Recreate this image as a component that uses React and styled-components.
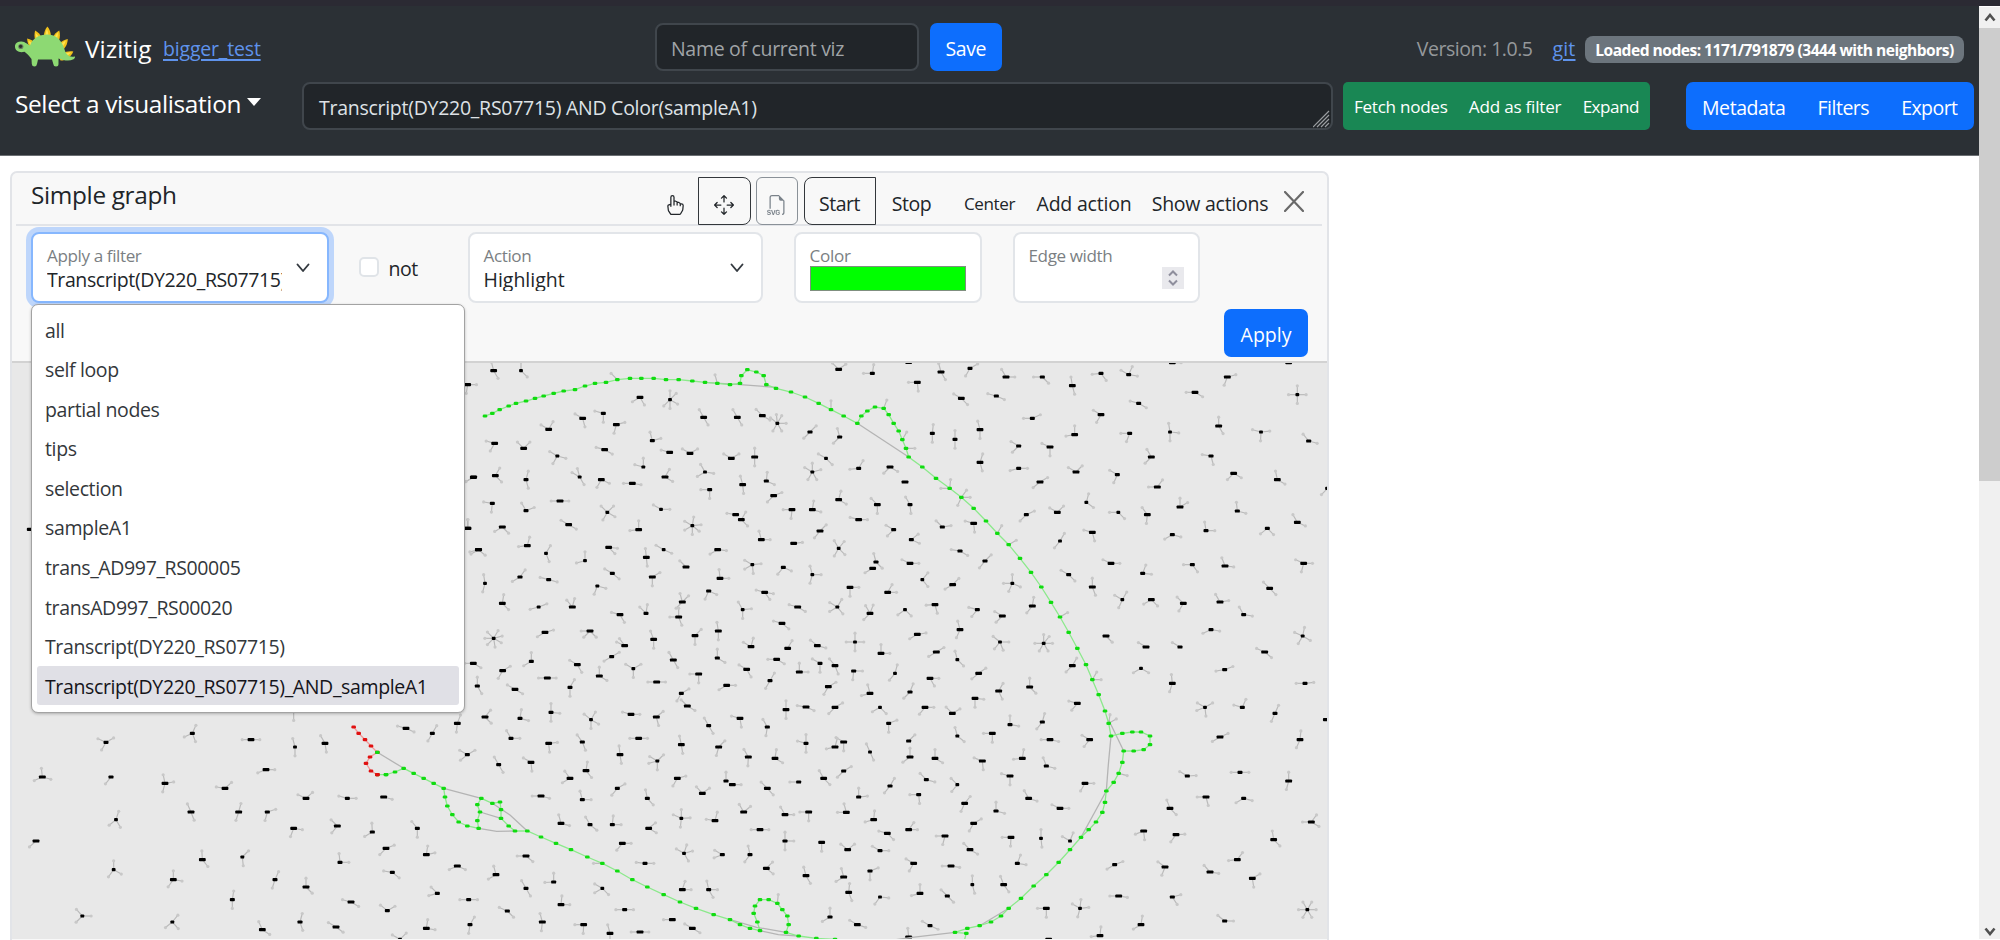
import React from "react";
import styled, { createGlobalStyle, css } from "styled-components";
import { BsHandIndex, BsArrowsMove, BsFiletypeSvg } from "react-icons/bs";

const Global = createGlobalStyle`
  * { box-sizing: border-box; }
  body {
    margin: 0;
    background: #fff;
    overflow: hidden;
    font-family: "Open Sans", "Noto Sans", sans-serif;
    font-size: 19.5px;
    line-height: 30px;
    letter-spacing: -0.4px;
    color: #212529;
  }
`;

const Page = styled.div`
  width: 2000px;
  height: 940px;
  display: flex;
  flex-direction: column;
  overflow: hidden;
`;
const WindowEdge = styled.div`
  height: 6px;
  flex: none;
  background: #2b2a33;
`;
const Viewport = styled.div`
  flex: 1;
  display: flex;
  min-height: 0;
`;
const Main = styled.main`
  width: 1979px;
  display: flex;
  flex-direction: column;
`;

/* Header */
const Header = styled.header`
  height: 150px;
  flex: none;
  padding: 17px 0 0;
  background: #2b3035;
  border-bottom: 1px solid #6b6f73;
  display: flex;
  flex-direction: column;
  gap: 11px;
`;
const HeaderRow = styled.div`
  display: flex;
  align-items: center;
  height: 48px;
  padding: 0 ${(p) => p.$right}px 0 15px;
`;
const Label = styled.span`
  font-size: ${(p) => p.$size || 19.5}px;
  letter-spacing: ${(p) => (p.$track === undefined ? -0.4 : p.$track)}px;
  font-weight: ${(p) => p.$weight || 400};
  color: ${(p) => p.$color || "inherit"};
  white-space: nowrap;
`;
const Brand = styled.div`
  width: 640px;
  display: flex;
  align-items: center;
  color: #fff;
  svg { margin: 0 10px 0 0; }
`;
const BrandName = styled(Label)`
  padding-top: 4px;
  width: 78px;
`;
const Link = styled.a`
  color: #5f93ec;
  text-decoration: underline;
  text-underline-offset: 3px;
  text-decoration-thickness: 1.5px;
  letter-spacing: ${(p) => p.$track}px;
  padding-top: 4px;
`;
const field = css`
  height: 48px;
  background: #212529;
  border: 2px solid #40464c;
  border-radius: 8px;
  display: flex;
  align-items: center;
  padding: 4px 0 0 14px;
`;
const NameInput = styled.div`
  ${field}
  width: 264px;
  color: #a0a4a7;
  letter-spacing: -0.31px;
`;
const Query = styled.div`
  ${field}
  width: 1031px;
  padding-left: 15px;
  color: #dee2e6;
  letter-spacing: -0.27px;
  justify-content: space-between;
  svg { align-self: flex-end; }
`;
const PrimaryButton = styled.button`
  width: ${(p) => p.$w}px;
  height: 48px;
  border: 0;
  border-radius: 7px;
  background: #0d6efd;
  color: #fff;
  font: inherit;
  letter-spacing: ${(p) => p.$track}px;
  padding: ${(p) => p.$top || 3}px 0 0;
  margin-left: ${(p) => p.$left || 0}px;
`;
const HeaderInfo = styled.div`
  margin-left: auto;
  display: flex;
  align-items: center;
`;
const Version = styled(Label)`
  padding-top: 4px;
  margin-right: 20px;
`;
const Badge = styled.span`
  margin-left: 9.5px;
  margin-top: 4px;
  width: 379px;
  height: 27px;
  border-radius: 8px;
  background: #6c757d;
  color: #fff;
  font-size: 15.6px;
  font-weight: 700;
  letter-spacing: -0.52px;
  line-height: 29px;
  text-align: center;
  white-space: nowrap;
`;
const VizSelect = styled.div`
  width: 287px;
  display: flex;
  align-items: center;
  gap: 6px;
  color: #fff;
  padding-bottom: 5px;
`;
const Caret = styled.i`
  border: 7.5px solid transparent;
  border-top: 8px solid #fff;
  border-bottom: 0;
  margin-top: -4px;
`;
const ButtonGroup = styled.div`
  height: 48px;
  padding-top: ${(p) => p.$top}px;
  border-radius: ${(p) => p.$radius}px;
  background: ${(p) => p.$bg};
  color: #fff;
  display: flex;
  align-items: center;
  justify-content: space-between;
  width: ${(p) => p.$w}px;
  padding-left: ${(p) => p.$pl}px;
  padding-right: ${(p) => p.$pr}px;
  margin-left: ${(p) => p.$left}px;
`;

/* Graph card */
const Card = styled.section`
  position: relative;
  width: 1319px;
  height: 769px;
  flex: none;
  margin: 15px 0 0 10px;
  background: #f8f8f8;
  border: 2px solid #e2e4e8;
  border-radius: 7px 7px 0 0;
  border-bottom: 0;
`;
const CardHead = styled.div`
  height: 53px;
  margin: 0 5px 0 4px;
  padding-left: 15px;
  border-bottom: 2px solid #e2e4e8;
  display: flex;
`;
const CardTitle = styled(Label)`
  flex: 0 0 618.5px;
  padding-top: 5px;
  line-height: 34px;
`;
const Tool = styled.button`
  width: ${(p) => p.$w}px;
  height: 48px;
  margin: 4px ${(p) => p.$gap || 0}px 0 0;
  padding: ${(p) => (p.$icon ? 7 : 5)}px 0 0;
  flex: none;
  background: transparent;
  color: ${(p) => (p.$muted ? "#7a828a" : "#212529")};
  border: 1.5px solid ${(p) => (p.$outline ? (p.$muted ? "#8a9198" : "#33373b") : "transparent")};
  border-radius: ${(p) => p.$radius || 0};
  font: inherit;
  font-size: ${(p) => p.$size || 19.5}px;
  letter-spacing: ${(p) => p.$track || 0}px;
  display: flex;
  align-items: center;
  justify-content: center;
  white-space: nowrap;
`;
const CloseIcon = styled.svg`
  margin: 18px 0 0 0;
  flex: none;
`;
const Form = styled.div`
  height: 137px;
  padding: 5.5px 19px 0;
  border-bottom: 2px solid #d2d2d2;
`;
const FormRow = styled.div`
  display: flex;
  height: 71px;
`;
const Field = styled.div`
  width: ${(p) => p.$w}px;
  height: 71px;
  margin-right: ${(p) => p.$gap}px;
  padding: 15px 14px 0;
  background: #fff;
  border: 2px solid ${(p) => (p.$focus ? "#86b7fe" : "#e2e5e9")};
  box-shadow: ${(p) => (p.$focus ? "0 0 0 5px #bed6fb" : "none")};
  border-radius: 8px;
  display: flex;
  align-items: flex-start;
  justify-content: space-between;
`;
const FieldBody = styled.div`
  width: ${(p) => p.$w}px;
  display: flex;
  flex-direction: column;
`;
const FieldLabel = styled.span`
  font-size: 17.1px;
  line-height: 24px;
  height: 24px;
  margin: -4.5px 0 -2.5px;
  color: #7b7f83;
  letter-spacing: ${(p) => p.$track}px;
`;
const FieldValue = styled.span`
  height: 25px;
  line-height: 28px;
  overflow: hidden;
  white-space: nowrap;
  letter-spacing: ${(p) => p.$track}px;
`;
const Chevron = styled.svg`
  margin: 14px ${(p) => p.$right}px 0 0;
`;
const Swatch = styled.div`
  width: 156px;
  height: 25px;
  flex: none;
  background: #0f0;
  border: 1.5px solid #7f8f7f;
`;
const Spinner = styled.div`
  width: 22px;
  height: 22px;
  margin-top: 18px;
  background: #e9e9ed;
  display: grid;
  place-items: center;
`;
const Check = styled.label`
  width: 109px;
  display: flex;
  gap: 10px;
  padding-top: 25.5px;
`;
const CheckBox = styled.i`
  width: 20px;
  height: 20px;
  background: #fff;
  border: 2px solid #e0e4e8;
  border-radius: 5px;
`;
const CheckText = styled.span`
  line-height: 24px;
  letter-spacing: -0.5px;
`;
const ApplyRow = styled.div`
  display: flex;
  justify-content: flex-end;
  padding-top: 6px;
`;
const Dropdown = styled.ul`
  position: absolute;
  left: 19px;
  top: 130.5px;
  width: 433.5px;
  height: 409px;
  margin: 0;
  padding: 5px 4.5px;
  list-style: none;
  background: #fff;
  border: 1.5px solid #a3a3a3;
  border-radius: 7px;
  box-shadow: 0 1px 3px rgba(0, 0, 0, 0.25);
`;
const Option = styled.li`
  height: 39.6px;
  padding-left: 8.5px;
  line-height: 41px;
  letter-spacing: -0.37px;
  border-radius: 3px;
  color: ${(p) => (p.$active ? "#15141a" : "#33373b")};
  background: ${(p) => (p.$active ? "#e0e0e6" : "transparent")};
  white-space: nowrap;
`;
const GraphSvg = styled.svg`
  display: block;
  width: 1315px;
  height: 576px;
  background: #e8e8e8;
`;

/* Scroll bar */
const ScrollBar = styled.div`
  width: 21px;
  height: 932px;
  margin-top: 1px;
  background: #f0f0f0;
  display: flex;
  flex-direction: column;
`;
const ScrollButton = styled.div`
  height: ${(p) => p.$h}px;
  display: grid;
  place-items: center;
`;
const ScrollThumb = styled.div`
  height: 453px;
  margin-bottom: auto;
  background: #cdcdcd;
`;

/*
 * Graph nodes, grouped in tiles. Positions are in thirds of a pixel from the
 * tile's origin: "x y kind hour hour ...", where kind is the mark's length
 * (W, M, S) and each hour is the clock direction of one neighbour.
 */
const TILES = [
  [0, 440, `88 268 M;1420 112 W 8;1403 265 W 12;1436 329 W 8;85 742 N`],
  [460, 350, `23 104 W 3 6.3;101 62 W 11.5 5;183 62 S 12 4.5;540 142 W 8 5;630 149 S 12 1.5 4 6 7.5;368 205 W 10 5.5;430 190 M 9.5 6;469 224 W 2.5 6.5;266 238 W 10 1;731 202 W 11 5;832 202 W 11 5;907 197 W 10.5 4;952 220 S 10.3 11.8 1 3 5 7;1050 246 M 1.5 7.5;1139 261 M 11.5 7.5;104 280 W 9.5 7;191 295 W 10.5 1.5;577 272 M 11.5 2.5;434 299 W 9.5 4;292 318 S 10 3.5 7;629 307 W 9.5;690 310 W 10 2;814 325 W 10 2;884 321 W 12 6;1098 325 S 10 4.5;1196 355 M 1 8.8;1290 351 W 7.5 4;1335 396 W;550 351 S 12 9.5;615 381 W 1 4;735 366 S 11 3.3 8;1057 366 S 12 10 2.5 5 7;41 381 W 8;106 377 W 1 4.5;198 389 M 12.5 5.5;359 381 S 11.5 10 5;424 389 W 3.8 7;517 400 W 9 3.3;848 404 W 11.5 5.8;919 393 M 12.2 3.8;749 419 M 9 6;941 437 W 2.3 7.5;97 460 M 9.3 6.2;300 453 W 9 3;198 482 M 11 2.3;442 487 S 10.5 1.5 4 7;603 478 S 10 3;697 527 S 12.3 2.8 4.3 6 8 10;827 494 W 9.3;844 509 W 1 4.5;996 479 W 9 6.2;1057 479 W 12.3 3.5;1136 449 W 12.5 4;1252 464 W 10.5 6;1350 464 M 11 5.8;1196 509 W 9.5 3;1447 531 M 10.5 2.7;24 535 W 12;127 531 W 8 4.5;326 524 W 10 4;536 539 W 12 8.8;1080 543 W 1.5 7.3;1301 539 M 10 7.5;1354 569 M 1.7 3.8;904 569 W 11.5 3;1001 580 W 2.8;55 599 W 8.5 4.3;202 587 W 12.5 8.8;258 610 S 1 5.3;446 592 W 3.2 4.5;611 599 S 10 3.8;559 622 W 11.8 5.8;773 599 W 8 3.2;877 644 S 10 2.8 5.8 8;1136 595 S 11 1.3 4.5 7;375 632 S 12 8.5;678 651 W 10.5;970 652 M 3.8 7.3;1248 636 M 11.5 4.5;1238 655 W 8;1350 640 W 9.8 3;457 670 M 10 4.3;180 681 M 1.2 8;266 689 M 9.5 3.5;75 700 S 11.7 6.5;577 681 W 2 6;780 685 W 11.8 3;1057 674 S 11.5 3 6.5;1387 689 S 1.3 4.7;1478 704 W 1.5 8;412 708 S 3.5 6.7;746 723 M 3.8 6.8;914 727 W 9.5 3.3 4.8;1170 712 W 3 6;1283 727 W 1 3;127 760 W 12.3 4.5;667 756 W 11.5 1.5 7.5;236 771 S 2.3 8.5;337 771 W 10.7 12.5;848 779 S 11 2.8 6;1013 771 W 9.5 4;1132 771 S 10 1 4.7 8;1230 790 W 11 12.7 7.5;1335 779 S 7.8 4.5;1425 764 W 8.9 5.5;480 794 W 9.5 5;558 790 M 12.3 10.5;656 801 W 9 5.3 12;966 820 W 9.5 4.3;390 843 W 9 4.5 7.5;255 847 W 2.5 8;101 865 S 9 10.5 1 2.5 4 5.7 7.5;775 843 W 11.7 6;705 857 W 1.5 6;581 868 W 11.3 6;1372 853 W 2.7 8;494 887 W 9.8 10.8;873 890 W 10 12.5;983 895 W 1;1072 887 W 10.3 3.5;1185 876 S 12 9 3 6;1136 58 W 1.8 10.5;1237 70 M 12.3 9;1346 37 W;1372 97 W 9 5.8;1443 66 W 11.5 5;1417 250 M 12.2 6;1485 268 M 12 6;472 89 N 10.5;772 100 N 11.5;1113 179 N 12;1271 175 N 12.7;1327 269 N 1;1338 295 N 3;1469 415 N 12.2 9`],
  [860, 360, `304 115 W 10 4.5;330 25 M 2 7;438 51 W 11 3;409 108 M 9.5 3.8;547 51 M 9 4.5;637 77 W 11.7 5.5;723 40 M 8.8 4.8;806 44 M 12.8 10 3.3;1102 51 W 2.5 6.7;1005 97 W 9 4;1312 104 S 12 3 6 9;836 130 M 9.5 4;517 175 M 2.2 9;723 164 W 10 7;360 209 W 11.5 6;644 224 W 12 8.7;809 220 M 9 6.7;930 216 S 11.7 3.2 6;1076 198 W 12 5;1203 216 S 9.5 2.8 6.1;1346 243 M 10.7 3.5;476 258 M 10 7.5;570 261 W 9.8 6;360 307 W 12.6 5.5;1053 288 M 9.3 5.5;874 291 W 11 7.5;476 325 M 8.5 3;648 336 W 10 1.5;772 344 M 10 6.8;540 366 W 2 7.7;1121 340 W 7.5 4;1252 359 W 11.6 4;892 381 W 1.2 9;1403 385 M 7.5;679 427 S 12.5 4.2;592 457 W 10 1.5;960 441 W 12 2;1132 453 M 11.8 3.5;499 464 M 2.2 7.5;775 457 S 9 4.5;862 464 W 10.8 6.2;1312 487 W 11 3.8;697 517 W 9.5 5.5;341 490 W 9.5 5.8;1222 505 M 7.7 4.5;1038 512 M 11.7 3;937 524 M 3.5 8;600 543 S 1 7.3;375 603 M 1.5 7.3;300 573 M 9.3 4;753 610 W 9.8 3;848 640 M 12.7 3.2;997 614 M 9 4.8;1095 618 W 11.3 3.2;1331 610 W 9.8 3 6.5;626 644 M 10 4.5;457 670 S 12 9 3.8 6.8;697 681 W 12 5.3;787 719 S 10 1 6.8;874 719 W 8 4.5;970 730 W 10.5 7;1080 726 W 11 2.7;1229 685 W 10.5 4.5;1151 764 M 11 3.3;517 738 W 12.3 7.3;352 749 M 9.5 7.3;427 768 W 10 7.5;1053 809 M 8.2 3.3;300 809 W 11.5 6.8;420 846 S 10.3 3 5.3 7.3;551 850 S 12 1.3 3 5 7 9;738 828 W 4.5;858 861 W 10;960 861 M 10;1328 828 S 12.4 4 7 9.8;937 8 W 3;1286 8 W;304 412 N 1.2 3 6.8;412 520 N 1;446 554 N 2;600 771 N 2`],
  [820, 640, `183 40 W 12 3;349 36 W 2 8;412 59 S 11.5 4.5;45 77 W 10.7 5.3;101 93 M 3 6.2;225 100 S 12.5 7.3;476 100 W 1.8 7.7;330 115 W 3 5;757 77 W 1 7.5;963 85 S 8 4;1214 89 M 2.3 8.7;1334 36 W 9.8 4.3;1057 130 W 11.8 6.6;1455 130 M 9 2.8;150 160 W 11.5 8.5;270 156 M 12.7 7.5;536 153 W 1 5.2;629 141 W 12 4.5;465 175 W 3.2 6;772 190 W 9.5 7.3;45 202 W 2 7.5;180 202 S 8 4.5;315 202 W 3 7.3;397 220 W 10.5 2;206 250 M 2.3 6;570 254 M 12 3.3;667 246 M 12.5 7.3;1155 202 S 10 2 5.8 8.3;1267 202 M 12.8 9.5;1365 220 M 12.8 6.8;1519 239 W;517 280 W 9 6;412 288 S 11.5 4.3;690 299 W 9 3.4;809 299 W 10 7.3;1200 291 W 2.2 8;1440 299 W 12.2 6.8;71 306 W 10 6;45 321 W 8.6 12.5;266 303 M 1.5;270 351 W 12 7.8;345 355 W 12 4;150 336 S 11.2 5.2;607 355 W 12.3 8.8;487 363 W 9.7 5.8;679 378 M 11.3 3.5;71 393 M 2 7.5;11 415 W 11 4.5;570 408 W 9.5 6;210 438 M 1 7.3;319 419 M 10.5 3.5;412 434 S 10.5 7.3;795 430 W 3 7;1102 408 M 10 2.9;1260 397 M 9 3;1406 423 W 12 6.5;116 471 M 12 2.8;296 464 M 9 5.8;434 490 W 1.3 6.8;626 475 W 11 3.6;720 505 W 9.8 3;1158 471 W 9 5.5;1271 475 M 8 3.5;1050 505 W 11.3 4.5;528 513 M 12 3.5;79 517 W 11.5 9;161 539 W 12.2 8.5;461 550 W 2 7;1474 546 W 1.2 9 4;266 569 W 1.2 3;202 580 W 9.5 4.5;375 588 W 9 6.5;573 592 W 9 6.1;663 595 S 12 5.8;750 603 S 10 12.7;971 573 W 8.3 5.8;1068 584 W 2.9 7.2;1361 599 W 11.7 4.5;5 607 W 6;83 629 W 10.3 1.7;180 632 M 10 3;450 629 W 10.5 4;281 670 W 10 7;393 678 W 9 3.3;592 670 M 12.7 3.3;884 674 M 2.3 8;1035 681 W 10.2 6.7;1252 659 W 1.2 8.8;150 693 M 2.3 6;71 711 W 11.5 8;1170 696 W 10.6 3.3;1297 715 W 2 5.7;457 734 S 12 5.5;551 734 W 11.3 4.8;86 757 W 12.2 5.3;300 760 W 12 8.5;180 771 S 3.2 7.2;382 768 M 10.5 4.5;896 768 W 9 3.3;1057 771 M 2.5 4.9;679 805 W 9 6;780 805 S 12.2 2.8 6.5 10;1462 809 S 11 1 3 5 7 9;30 831 M 12 8;112 854 W 10 3.6;330 857 M 10 3.8;963 854 W 12.3 8;1214 843 M 10.3 3;266 891 W 11.8;840 887 W 12.2 8.8;686 898 W;817 119 N 1 3;866 250 N 12.3 2;896 400 N 3.5`],
  [320, 700, `15 130 W 11 5.7;258 85 W 9.5 3.8;337 100 M 1 7;412 70 W 12.7 6.2;495 51 W 1.3 4.5;600 55 M 12.3 3.5;693 37 M 12 3.2 6;813 59 S 10.3 1 4 6;933 43 W 9.5 3;1009 51 W 1.7 5.5;1102 18 W 10.5 4;1166 77 M 11 5;1260 55 W 9.5 5.7;1398 29 W 12 6;1458 21 W 9.3 3.8;573 115 M 11 3;686 130 W 2.8 5.8;787 126 M 10.8 5.3;956 115 W 9 3;1084 134 W 11.6 5.7;1196 141 W 1.5 6.5;1342 81 M 11 6.3;1458 130 M 12 6 9.5;442 164 M 10 2 7.7;536 194 M 11 5;633 187 W 10 5.8;900 164 W 11.8 5.7;1012 183 S 10 1.5 8.5 6;1285 171 W 11 6.1;1365 175 W 12.3 4;750 235 W 10.8 8;798 212 W 12.3 4.7;1072 235 W 2.5 7;1218 243 M 12;1237 254 W 3;892 265 M 2 7.3;1147 280 W 10.6 1.8;1342 265 W 10.5 4.6;1436 246 M 9;82 295 M 9.5 3;191 291 W 3.5;663 288 W 9 3.5;787 299 M 11.5 3;982 295 M 11.6 4.6;52 378 W 10.5 7.3;157 396 M 11.9 8;292 385 M 10.7 6;723 370 W 11.5 3.5;810 374 M 11 4.3;877 374 M 12.2 3;986 385 W 1.7 4;1084 355 S 12 2.9 6.2 9.8;1185 362 W 12.5 9.3;1271 336 W 11 1.7;1320 389 W 9 3;1395 344 W 11 3;1466 336 W 9 6;198 445 W 2.3 7.5;319 464 W 12.3 2.6;907 430 W 3 7.3;1092 460 S 10 12.6 2.5 5;1395 423 M 12 3 6;60 487 M 11.8 3;217 517 M 9.3 4.3;412 498 W 8.2 3.8;618 468 W 9 4.3;528 524 W 11.5 8;975 490 M 9.2 3;1207 464 M 10 8.3;1290 464 M 11.6 7.2;1339 505 W 1.5 4.3;1458 527 W 11.5 5;352 580 M 10.5 8.5;618 565 M 11 5;701 546 M 12 8.9;847 565 S 10 8 4.5;1087 569 W 12.6 3;1166 569 M 11.6 3 5;93 606 W 9.5 4;202 632 M 10.3 2;446 599 M 9 3;562 633 M 9.8 4.5;723 614 W 12.2 3;914 629 M 9 3;48 681 W 10 4.2;319 685 W 12.3 3.3;450 674 M 1 6.3;667 666 W 11.5 6.2;791 674 W 9 6.1;1057 659 W 9;1117 685 W 10 4;870 700 W 11.5 6;960 696 W 9 3;240 718 S 10 1.5;847 490 N 9;1372 610 N 12.2`],
  [0, 700, `318 127 M 9.8 2 7;577 100 M 12.8 8.2 5.3;753 119 W 9 3;885 141 S 11.5 6;881 35 N 6;127 231 W 11.8 8.2 3.5;333 231 M 7.3;495 250 W 11.6 2.7 6.5;798 209 W 3 8.3;675 265 W 9.3 1.6;918 295 W 9.8 1.6;573 336 W 11.2 5.3;716 336 W 12.5 6.6;802 336 M 2.4 6.5;348 359 S 12.6 5 7.7;108 423 W 7.6;881 385 W 3.3 6.7;607 479 W 11.9 4.7;727 471 S 1.5 5.8;341 509 S 12 4 7.2;520 539 W 12 3.3 7.2;825 539 M 12.8 6.6;918 561 W 12 4.5;697 599 M 12.3 6;247 648 S 10.6 3 7.5;517 666 S 1.3 4.6 7.7;787 689 W 11.2 4.1;900 666 M 12.5 5.4`],
  [460, 650, `40 40 W 9 4;52 108 M 12 5;128 62 W 2 7;165 118 W 10 4;214 34 M 12 8;262 84 W 9 3;330 112 M 1 6;352 44 W 10 5;418 78 W 12 4;455 20 M 2 8;520 56 S 10 2 6;590 96 W 9 3;640 30 W 11 5;664 130 M 2 7;716 72 W 9 6;772 24 M 12 4;800 106 W 3 8;860 58 W 10 5;930 92 M 1 7;950 28 W 9 4;1018 66 W 12 3;1080 40 M 10 6;1105 110 W 2 7;`],
];

const BLACK = TILES.flatMap(([ox, oy, text]) =>
  text.split(";").filter(Boolean).map((row) => {
    const [x, y, kind, ...hours] = row.trim().split(" ");
    return { x: ox + x / 3, y: oy + y / 3, kind, hours: hours.map(Number) };
  })
);
const LENGTH = { W: 6.8, M: 5, S: 3.8 };

const points = (ox, oy, text) =>
  text.split(" ").map((p) => {
    const [x, y] = p.split(",").map(Number);
    return [ox + x / 3, oy + y / 3];
  });
const ARC = [
  ...points(460, 350, "75,198 97,190 119,179 146,168 168,160 198,153 225,145 251,138 281,130 311,123 345,119 375,108 405,100 438,97 472,89 510,85 544,85 581,85 618,89 656,89 697,93 735,97 772,100 810,104 840,100 844,77 862,59 889,66 911,77 919,104 948,115 993,126 1035,141 1076,160 1113,179 1151,198 1192,220 1204,198 1222,183 1245,171 1271,175 1286,194 1301,220 1316,243 1327,269 1338,295 1346,321 1387,351 1428,385 1469,415"),
  ...points(860, 360, "304,412 341,445 378,483 412,520 446,554 480,595 513,637 544,681 573,727 600,771 626,817 652,865"),
  ...points(820, 640, "798,74 817,119 836,164 855,213 866,250 873,288 907,280 937,276 963,276 990,288 990,314 971,329 941,333 911,333 907,367 896,400 881,427 859,453 855,487 847,517 828,546 806,569 783,592 750,629 716,667 679,704 641,738 603,775 566,805 543,828 513,846 479,857 442,865 405,877 439,880 432,905"),
];
const TAIL = [
  ...points(320, 700, "172,224 198,224 225,216 251,205 281,220 311,235 341,250 371,265 375,291 382,318 397,344 416,366 442,378 476,385 472,362 480,336 472,314 484,295 517,310 540,306 543,329 543,355 566,378 585,393 622,393 663,411 708,430 753,449 802,471 847,490 892,513 937,539 982,561 1031,584 1080,606 1128,625 1181,644 1230,659 1260,674 1290,685 1320,692 1312,666 1301,640 1305,618 1320,599 1346,599 1372,610 1387,629 1402,648 1406,674 1398,697 1436,708 1489,715"),
  ...points(820, 640, "45,898 93,902"),
];
const RED = points(320, 700, "101,81 116,100 135,119 153,138 172,157 150,171 138,190 153,213 172,224");
const SHORTCUTS = [
  points(320, 700, "172,157 251,205"), points(320, 700, "371,265 484,295"),
  points(320, 700, "480,336 543,355"), points(320, 700, "476,385 530,394 585,393"),
  points(320, 700, "517,310 570,345 622,393"), points(320, 700, "1230,659 1310,682 1398,697"),
  points(320, 700, "1320,692 1375,704 1436,708"), points(460, 350, "735,97 840,104 948,112"),
  points(460, 350, "1192,220 1346,321"), points(820, 640, "866,240 911,333"),
  points(820, 640, "873,288 865,375 859,453"), points(820, 640, "859,453 783,592"),
  points(820, 640, "566,805 479,857"), points(820, 640, "405,877 270,893 200,903"),
];
const line = (pts) => pts.map(([x, y]) => `${x.toFixed(1)},${y.toFixed(1)}`).join(" ");

function Dots({ pts, color }) {
  return pts.map(([x, y], i) => (
    <rect key={i} x={x - 2.3} y={y - 1.6} width={4.6} height={3.2} rx={1.3} fill={color} />
  ));
}

function Graph() {
  return (
    <GraphSvg viewBox="12 363 1315 576">
      {BLACK.map(({ x, y, hours }, i) =>
        hours.map((h) => {
          const a = (h * Math.PI) / 6;
          const dx = Math.sin(a) * 8.8;
          const dy = -Math.cos(a) * 8.8;
          return (
            <g key={`${i}-${h}`}>
              <line x1={x} y1={y} x2={x + dx} y2={y + dy} stroke="#b9b9b9" strokeWidth={1.15} />
              <circle cx={x + dx} cy={y + dy} r={1.6} fill="#c8c8c8" />
            </g>
          );
        })
      )}
      {BLACK.filter((n) => n.kind !== "N").map(({ x, y, kind }, i) => (
        <rect key={i} x={x - LENGTH[kind] / 2} y={y - 1.6} width={LENGTH[kind]} height={3.2} rx={0.9} fill="#000" />
      ))}
      <g fill="none" strokeWidth={1.3}>
        {SHORTCUTS.map((s, i) => <polyline key={i} points={line(s)} stroke="#b4b4b4" />)}
        <polyline points={line(ARC)} stroke="#8ce98c" />
        <polyline points={line(TAIL)} stroke="#8ce98c" />
        <polyline points={line(RED)} stroke="#f29a9a" />
      </g>
      <Dots pts={ARC} color="#10dc10" />
      <Dots pts={TAIL} color="#10dc10" />
      <Dots pts={RED} color="#e01010" />
      <Dots pts={[RED[4], TAIL[1]]} color="#10dc10" />
      <Dots pts={[RED[8]]} color="#e01010" />
    </GraphSvg>
  );
}

function Dino() {
  const spikes = [[31.3, 24.5, -40], [37.6, 17.5, -22], [47.4, 14, 0], [56.8, 17.5, 22], [63.6, 25, 40], [67.6, 35.5, 62]];
  return (
    <svg width="60" height="42" viewBox="15 27 60 42">
      <g transform="translate(0 20)">
        {spikes.map(([x, y, r]) => (
          <g key={x} transform={`translate(${x} ${y}) rotate(${r})`}>
            <path d="M0-6.500C4.500-1 4 6 2 9H-2C-4 6-4.500-1 0-6.500Z" fill="#f2c21a" />
            <path d="M-0.500-4C1.500 0 1.500 5 0 8H-1.500C-2.500 4-2 0-0.500-4Z" fill="#ffe352" />
          </g>
        ))}
        <path d="M15 28C14.500 24 18 22.300 21.500 22.500C25.500 22.800 27.500 25.500 30 26.500C33 19 39 15.500 47 15.500C56.500 15.500 61.500 21.500 64 29C66 36 69 38.500 74.500 37.500C75.500 37.500 75 39.500 73.500 40.300C69 42.500 64 41.500 58.500 39.500V45Q58.500 47.500 56 47.500Q53.500 47.500 53.300 45L52 40.500H38L37 45Q36.500 47.500 34.500 47.500Q32 47.500 31.800 45L31.500 40C29 37 27 34.500 24.500 32.800C19 34 15.500 32 15 28Z" fill="#8dd973" />
        <circle cx="20.800" cy="27.500" r="2.600" fill="#6a7a62" />
        <circle cx="20.600" cy="27.300" r="1.600" fill="#2a2d2b" />
      </g>
    </svg>
  );
}

const Down = ({ right = 0 }) => (
  <Chevron $right={right} width="14" height="10" viewBox="0 0 14 10">
    <path d="M1.500 1.500L7 8L12.500 1.500" fill="none" stroke="#343a40" strokeWidth="1.900" strokeLinecap="round" strokeLinejoin="round" />
  </Chevron>
);

const OPTIONS = [
  "all", "self loop", "partial nodes", "tips", "selection", "sampleA1",
  "trans_AD997_RS00005", "transAD997_RS00020", "Transcript(DY220_RS07715)",
  "Transcript(DY220_RS07715)_AND_sampleA1",
];

export default function App() {
  return (
    <Page>
      <Global />
      <WindowEdge />
      <Viewport>
        <Main>
          <Header>
            <HeaderRow $right={15}>
              <Brand>
                <Dino />
                <BrandName $size={24.4} $track={0}>Vizitig</BrandName>
                <Link $track={-0.18}>bigger_test</Link>
              </Brand>
              <NameInput>Name of current viz</NameInput>
              <PrimaryButton $w={72.5} $left={10.5} $track={-0.4}>Save</PrimaryButton>
              <HeaderInfo>
                <Version $track={-0.48} $color="#95989b">Version: 1.0.5</Version>
                <Link $track={0.18}>git</Link>
                <Badge>Loaded nodes: 1171/791879 (3444 with neighbors)</Badge>
              </HeaderInfo>
            </HeaderRow>
            <HeaderRow $right={5}>
              <VizSelect>
                <Label $size={24.4} $track={-0.36}>Select a visualisation</Label>
                <Caret />
              </VizSelect>
              <Query>
                Transcript(DY220_RS07715) AND Color(sampleA1)
                <svg width="18" height="18" viewBox="0 0 18 18">
                  <path d="M0 17L16 1M4 17L16 5M8 17L16 9M12 17L16 13" stroke="#9a9da0" strokeWidth="1.200" />
                </svg>
              </Query>
              <ButtonGroup $bg="#198754" $w={307.5} $left={9.5} $radius={5} $pl={11.5} $pr={11} $top={2}>
                <Label $size={17.1} $track={-0.28}>Fetch nodes</Label>
                <Label $size={17.1} $track={-0.22}>Add as filter</Label>
                <Label $size={17.1} $track={-0.5}>Expand</Label>
              </ButtonGroup>
              <ButtonGroup $bg="#0d6efd" $w={287.5} $left={36} $radius={7} $pl={16} $pr={16} $top={4}>
                <Label $track={-0.42}>Metadata</Label>
                <Label $track={-0.5}>Filters</Label>
                <Label $track={-0.55}>Export</Label>
              </ButtonGroup>
            </HeaderRow>
          </Header>
          <Card>
            <CardHead>
              <CardTitle $size={24.4} $track={-0.36}>Simple graph</CardTitle>
              <Tool $w={48.5} $icon><BsHandIndex size={20} /></Tool>
              <Tool $w={52.5} $gap={5.5} $icon $outline $radius="0 8px 8px 0"><BsArrowsMove size={20} /></Tool>
              <Tool $w={42} $gap={5.5} $icon $outline $muted $radius="6px"><BsFiletypeSvg size={20} /></Tool>
              <Tool $w={72} $outline $track={-0.5} $radius="8px 0 0 8px">Start</Tool>
              <Tool $w={72} $track={-0.4}>Stop</Tool>
              <Tool $w={84} $size={17.1} $track={-0.4}>Center</Tool>
              <Tool $w={105} $track={-0.2}>Add action</Tool>
              <Tool $w={147} $track={-0.25}>Show actions</Tool>
              <CloseIcon width="20" height="21" viewBox="0 0 20 21">
                <path d="M1 1L19 20M19 1L1 20" stroke="#6a6a6a" strokeWidth="2.200" strokeLinecap="round" />
              </CloseIcon>
            </CardHead>
            <Form>
              <FormRow>
                <Field $w={297.5} $gap={30} $focus>
                  <FieldBody $w={235}>
                    <FieldLabel $track={-0.4}>Apply a filter</FieldLabel>
                    <FieldValue $track={-0.4}>Transcript(DY220_RS07715)</FieldValue>
                  </FieldBody>
                  <Down right={3} />
                </Field>
                <Check>
                  <CheckBox />
                  <CheckText>not</CheckText>
                </Check>
                <Field $w={295.5} $gap={30.5}>
                  <FieldBody $w={200}>
                    <FieldLabel $track={-0.4}>Action</FieldLabel>
                    <FieldValue $track={0}>Highlight</FieldValue>
                  </FieldBody>
                  <Down right={3} />
                </Field>
                <Field $w={188.5} $gap={30.5}>
                  <FieldBody $w={157}>
                    <FieldLabel $track={-0.3}>Color</FieldLabel>
                    <Swatch />
                  </FieldBody>
                </Field>
                <Field $w={187} $gap={0}>
                  <FieldBody $w={110}>
                    <FieldLabel $track={-0.4}>Edge width</FieldLabel>
                  </FieldBody>
                  <Spinner>
                    <svg width="10" height="16" viewBox="0 0 10 16">
                      <path d="M1 5.500L5 1.500L9 5.500M1 10.500L5 14.500L9 10.500" fill="none" stroke="#8f8f9d" strokeWidth="2" />
                    </svg>
                  </Spinner>
                </Field>
              </FormRow>
              <ApplyRow>
                <PrimaryButton $w={84} $track={0} $top={4}>Apply</PrimaryButton>
              </ApplyRow>
            </Form>
            <Graph />
            <Dropdown>
              {OPTIONS.map((o, i) => (
                <Option key={o} $active={i === OPTIONS.length - 1}>{o}</Option>
              ))}
            </Dropdown>
          </Card>
        </Main>
        <ScrollBar>
          <ScrollButton $h={21}>
            <svg width="12" height="9" viewBox="0 0 12 9"><path d="M1.500 7.500L6 2L10.500 7.500" fill="none" stroke="#505050" strokeWidth="2.600" /></svg>
          </ScrollButton>
          <ScrollThumb />
          <ScrollButton $h={16}>
            <svg width="12" height="9" viewBox="0 0 12 9"><path d="M1.500 1.500L6 7L10.500 1.500" fill="none" stroke="#505050" strokeWidth="2.600" /></svg>
          </ScrollButton>
        </ScrollBar>
      </Viewport>
    </Page>
  );
}
